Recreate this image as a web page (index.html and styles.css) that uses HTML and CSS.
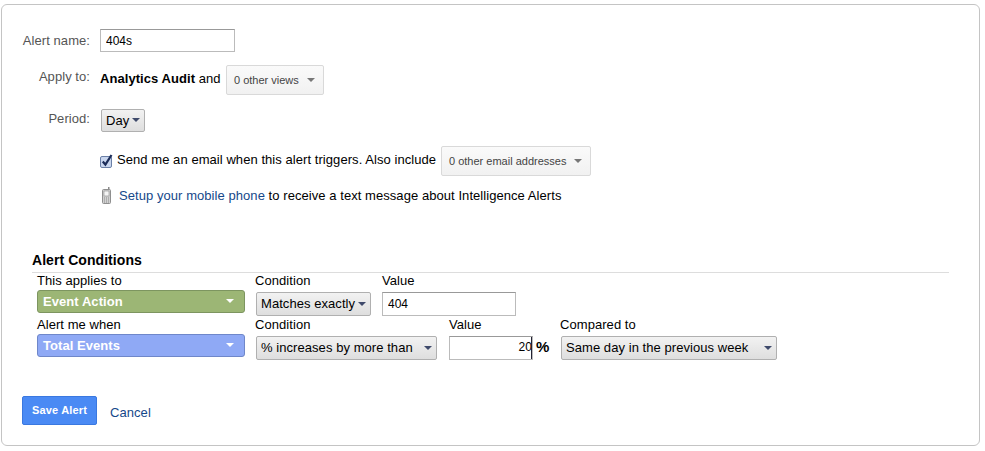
FILE: index.html

```html
<!DOCTYPE html>
<html lang="en">
<head>
    <meta charset="UTF-8">
    <title>Alert</title>
    <link rel="stylesheet" href="styles.css">
</head>
<body>
<div class="panel">
    <div class="row row-name">
        <div class="label">Alert name:</div>
        <input class="text name-input" type="text" value="404s">
    </div>
    <div class="row row-apply">
        <div class="label">Apply to:</div>
        <div class="apply-text"><b>Analytics Audit</b> and</div>
        <a class="menu views-menu">0 other views<i class="caret-grey"></i></a>
    </div>
    <div class="row row-period">
        <div class="label">Period:</div>
        <a class="select day-select">Day<i class="caret"></i></a>
    </div>
    <div class="option row-email">
        <svg class="check" width="13" height="14" viewBox="0 0 13 14">
            <rect x="0.5" y="2.5" width="11" height="11" rx="1.5" fill="#c9d6ee" stroke="#6a7fa6"/>
            <path d="M2.8 7.5l2.6 3.2L11.5 1" fill="none" stroke="#1b2c58" stroke-width="2.2"/>
        </svg>
        <span class="email-text">Send me an email when this alert triggers. Also include</span>
        <a class="menu email-menu">0 other email addresses<i class="caret-grey"></i></a>
    </div>
    <div class="option row-phone">
        <svg class="phone" width="9" height="17" viewBox="0 0 9 17">
            <rect x="6" y="0" width="1.5" height="3" fill="#8a8a8a"/>
            <rect x="0.5" y="2.5" width="8" height="14" rx="1" fill="#d2d2d2" stroke="#8f8f8f"/>
            <rect x="2" y="4" width="5" height="5" fill="#f4f4f4" stroke="#777" stroke-width="0.5"/>
            <path d="M2 11h1M4 11h1M6 11h1M2 13h1M4 13h1M6 13h1M2 15h1M4 15h1M6 15h1" stroke="#8a8a8a" stroke-width="1"/>
        </svg>
        <span><a class="link">Setup your mobile phone</a> to receive a text message about Intelligence Alerts</span>
    </div>

    <div class="conditions">
        <h3>Alert Conditions</h3>
        <div class="cond-row">
            <div class="col col-metric">
                <div class="cap">This applies to</div>
                <a class="pill pill-green">Event Action<i class="caret-white"></i></a>
            </div>
            <div class="col col-cond1">
                <div class="cap">Condition</div>
                <a class="select cond1-select">Matches exactly<i class="caret"></i></a>
            </div>
            <div class="col col-value1">
                <div class="cap">Value</div>
                <input class="text value1-input" type="text" value="404">
            </div>
        </div>
        <div class="cond-row">
            <div class="col col-metric">
                <div class="cap">Alert me when</div>
                <a class="pill pill-blue">Total Events<i class="caret-white"></i></a>
            </div>
            <div class="col col-cond2">
                <div class="cap">Condition</div>
                <a class="select cond2-select">% increases by more than<i class="caret"></i></a>
            </div>
            <div class="col col-value2">
                <div class="cap">Value</div>
                <div class="value2-wrap">
                    <div class="text value2-input">20<span class="cursor"></span></div>
                    <b class="percent">%</b>
                </div>
            </div>
            <div class="col col-compare">
                <div class="cap">Compared to</div>
                <a class="select compare-select">Same day in the previous week<i class="caret"></i></a>
            </div>
        </div>
    </div>

    <div class="actions">
        <a class="save">Save Alert</a>
        <a class="link cancel">Cancel</a>
    </div>
</div>
</body>
</html>
```

FILE: styles.css

```css
* {
    margin: 0;
    padding: 0;
    box-sizing: border-box;
}

body {
    background: #fff;
    font-family: "Liberation Sans", Arial, sans-serif;
    font-size: 13px;
    letter-spacing: .06px;
    color: #000;
}

.panel {
    width: 979px;
    height: 442px;
    margin: 4px 0 0 1px;
    padding-top: 24px;
    border: #c4c4c4 1px solid;
    border-radius: 6px;
}

.row {
    display: flex;
}

.label {
    width: 89px;
    padding-right: 1px;
    text-align: right;
    color: #555;
}

.text {
    display: block;
    border: #bbb 1px solid;
    border-top-color: #999;
    background: #fff;
    font-family: "Liberation Sans", Arial, sans-serif;
    font-size: 12px;
    color: #000;
    outline: none;
}

.row-name {
    height: 23px;
    align-items: center;
}

.name-input {
    width: 135px;
    height: 23px;
    margin-left: 9px;
    padding-left: 5px;
}

.row-apply {
    margin-top: 13px;
    height: 30px;
}

.row-apply .label {
    padding-top: 4px;
}

.apply-text {
    margin-left: 9px;
    padding-top: 6px;
    width: 126px;
}

.menu {
    display: flex;
    align-items: center;
    height: 30px;
    padding-left: 7px;
    border: #d9d9d9 1px solid;
    border-radius: 2px;
    background: linear-gradient(#fafafa, #f1f1f1);
    font-size: 11px;
    letter-spacing: 0;
    color: #444;
}

.views-menu {
    width: 98px;
}

.caret-grey {
    width: 0;
    height: 0;
    margin-left: auto;
    margin-right: 8px;
    border-left: 4px solid transparent;
    border-right: 4px solid transparent;
    border-top: 4px solid #777;
}

.row-period {
    margin-top: 14px;
    height: 23px;
}

.row-period .label {
    padding-top: 2px;
}

.select {
    display: flex;
    align-items: center;
    height: 24px;
    padding-left: 4px;
    padding-bottom: 1px;
    border: #b0b0b0 1px solid;
    border-radius: 2px;
    background: linear-gradient(#f2f2f2, #dedede);
    color: #000;
}

.caret {
    width: 0;
    height: 0;
    margin-left: auto;
    margin-right: 4px;
    border-left: 4px solid transparent;
    border-right: 4px solid transparent;
    border-top: 4px solid #3f4a6b;
}

.day-select {
    width: 44px;
    height: 23px;
    margin-left: 10px;
}

.option {
    display: flex;
    align-items: center;
    margin-left: 98px;
}

.row-email {
    margin-top: 14px;
    height: 29px;
}

.check {
    margin-right: 4px;
}

.email-text {
    width: 324px;
    margin-top: -2px;
}

.email-menu {
    width: 150px;
}

.row-phone {
    margin-top: 10px;
    height: 20px;
}

.phone {
    margin-left: 2px;
    margin-right: 8px;
}

.link {
    color: #15488a;
}

.conditions {
    margin: 47px 30px 0 30px;
}

.conditions h3 {
    height: 21px;
    padding-bottom: 2px;
    font-size: 14px;
    line-height: 16px;
    color: #000;
    border-bottom: #ddd 1px solid;
}

.cond-row {
    display: flex;
    height: 44px;
    padding-left: 5px;
}

.cap {
    height: 17px;
    line-height: 16px;
}

.col-metric {
    width: 218px;
}

.pill {
    display: flex;
    align-items: center;
    width: 208px;
    height: 23px;
    padding-left: 5px;
    padding-bottom: 1px;
    border-radius: 3px;
    font-weight: bold;
    color: #fff;
}

.pill-green {
    background: #9cb675;
    border: #7d9560 1px solid;
}

.pill-blue {
    background: #8fa9f5;
    border: #6f87c9 1px solid;
}

.caret-white {
    width: 0;
    height: 0;
    margin-left: auto;
    margin-right: 10px;
    border-left: 4px solid transparent;
    border-right: 4px solid transparent;
    border-top: 4px solid #fff;
}

.col-cond1 {
    width: 127px;
}

.cond1-select {
    width: 115px;
    margin-left: 1px;
    margin-top: 2px;
}

.value1-input {
    width: 134px;
    height: 24px;
    margin-top: 2px;
    padding-left: 5px;
}

.col-cond2 {
    width: 194px;
}

.cond2-select {
    width: 181px;
    margin-left: 1px;
    margin-top: 2px;
}

.col-value2 {
    width: 111px;
}

.value2-wrap {
    display: flex;
    align-items: center;
    margin-top: 2px;
}

.value2-input {
    width: 84px;
    height: 24px;
    line-height: 21px;
    text-align: right;
}

.cursor {
    display: inline-block;
    width: 1px;
    height: 22px;
    margin-left: -1px;
    background: #223;
    vertical-align: top;
}

.percent {
    margin-left: 3px;
    margin-top: -3px;
    font-size: 15px;
}

.compare-select {
    width: 216px;
    margin-left: 1px;
    margin-top: 2px;
}

.actions {
    display: flex;
    align-items: center;
    margin: 35px 0 0 20px;
}

.save {
    width: 75px;
    height: 29px;
    border: #3a78e0 1px solid;
    border-radius: 2px;
    background: #4a8af4;
    color: #fff;
    font-size: 11px;
    font-weight: bold;
    letter-spacing: .15px;
    line-height: 27px;
    text-align: center;
}

.cancel {
    margin-left: 13px;
    margin-top: 4px;
}
```
